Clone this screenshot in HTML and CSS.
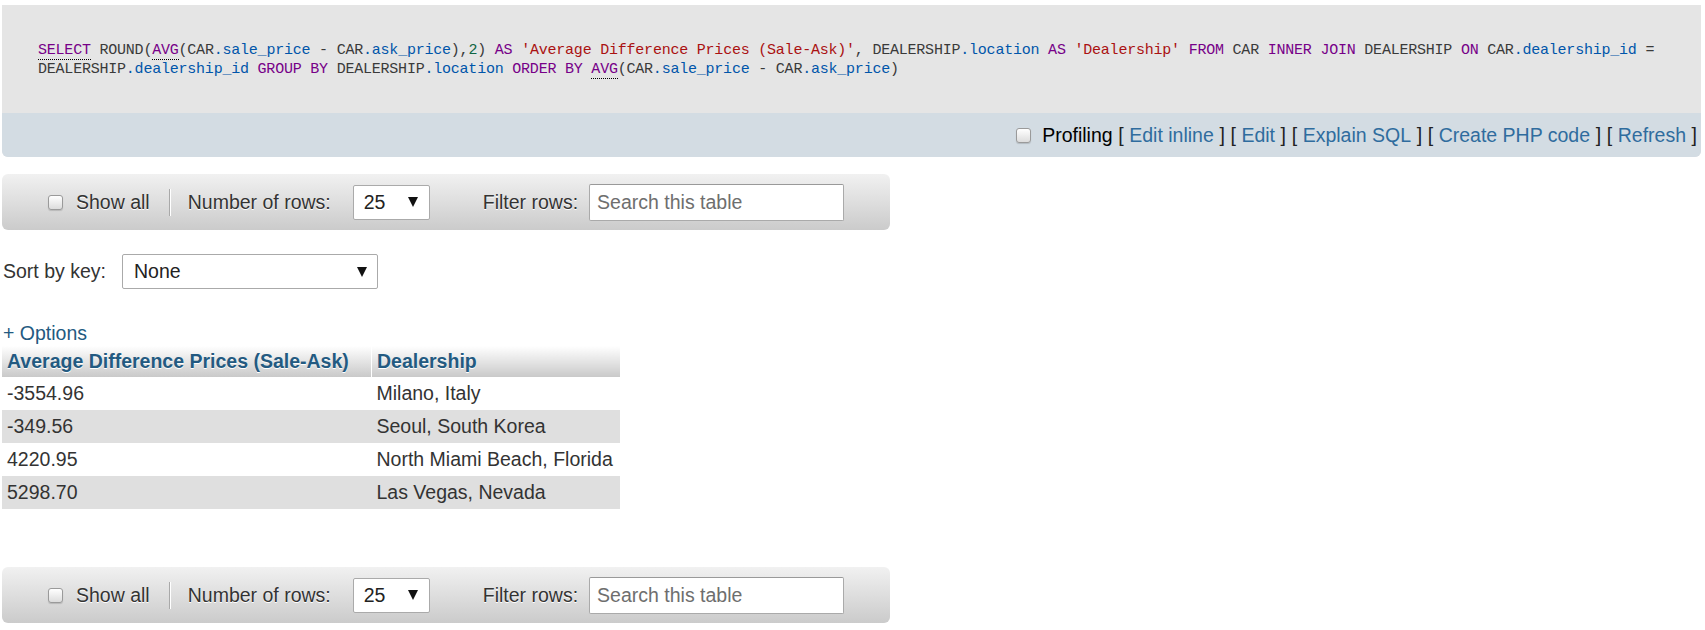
FILE: index.html
```html
<!DOCTYPE html>
<html lang="en">
<head>
<meta charset="utf-8">
<title>SQL result</title>
<link rel="stylesheet" href="styles.css">
</head>
<body>
<div class="page">
  <div class="sql-box">
    <div class="sql-code"><code><span class="kw doc">SELECT</span> ROUND(<span class="kw doc">AVG</span>(CAR<span class="var">.sale_price</span> - CAR<span class="var">.ask_price</span>),<span class="num">2</span>) <span class="kw">AS</span> <span class="str">'Average Difference Prices (Sale-Ask)'</span>, DEALERSHIP<span class="var">.location</span> <span class="kw">AS</span> <span class="str">'Dealership'</span> <span class="kw">FROM</span> CAR <span class="kw">INNER JOIN</span> DEALERSHIP <span class="kw">ON</span> CAR<span class="var">.dealership_id</span> =<br>DEALERSHIP<span class="var">.dealership_id</span> <span class="kw">GROUP BY</span> DEALERSHIP<span class="var">.location</span> <span class="kw">ORDER BY</span> <span class="kw doc">AVG</span>(CAR<span class="var">.sale_price</span> - CAR<span class="var">.ask_price</span>)</code></div>
    <div class="sql-tools">
      <span class="check"></span>
      <span class="profiling">Profiling</span>
      <span class="br">[</span><a class="link" href="#">Edit inline</a><span class="br">]</span>
      <span class="br">[</span><a class="link" href="#">Edit</a><span class="br">]</span>
      <span class="br">[</span><a class="link" href="#">Explain SQL</a><span class="br">]</span>
      <span class="br">[</span><a class="link" href="#">Create PHP code</a><span class="br">]</span>
      <span class="br">[</span><a class="link" href="#">Refresh</a><span class="br">]</span>
    </div>
  </div>

  <div class="navbar top">
    <span class="check nav-check"></span>
    <span class="nav-label show-all">Show all</span>
    <span class="nav-sep"></span>
    <span class="nav-label rows-label">Number of rows:</span>
    <span class="select rows-select"><span>25</span><span class="arrow"></span></span>
    <span class="nav-label filter-label">Filter rows:</span>
    <input class="search" type="text" placeholder="Search this table">
  </div>

  <div class="sortkey">
    <span class="sort-label">Sort by key:</span>
    <span class="select key-select"><span>None</span><span class="arrow"></span></span>
  </div>

  <div class="options"><a class="link" href="#">+ Options</a></div>

  <table class="results">
    <thead>
      <tr><th class="c1">Average Difference Prices (Sale-Ask)</th><th class="c2">Dealership</th></tr>
    </thead>
    <tbody>
      <tr><td>-3554.96</td><td>Milano, Italy</td></tr>
      <tr class="even"><td>-349.56</td><td>Seoul, South Korea</td></tr>
      <tr><td>4220.95</td><td>North Miami Beach, Florida</td></tr>
      <tr class="even"><td>5298.70</td><td>Las Vegas, Nevada</td></tr>
    </tbody>
  </table>

  <div class="navbar bottom">
    <span class="check nav-check"></span>
    <span class="nav-label show-all">Show all</span>
    <span class="nav-sep"></span>
    <span class="nav-label rows-label">Number of rows:</span>
    <span class="select rows-select"><span>25</span><span class="arrow"></span></span>
    <span class="nav-label filter-label">Filter rows:</span>
    <input class="search" type="text" placeholder="Search this table">
  </div>
</div>
</body>
</html>
```

FILE: styles.css
```css
html, body {
  margin: 0;
  padding: 0;
  background: #fff;
}

body {
  font-family: "Liberation Sans", Arial, sans-serif;
  font-size: 19.5px;
  color: #333;
}

.page {
  padding: 5px 4px 0 2px;
}

/* ---------- SQL query box ---------- */
.sql-box {
  background: #e5e5e5;
  border-radius: 0 0 6px 6px;
  overflow: hidden;
}

.sql-code {
  padding: 36px 36px 34px 36px;
  font-family: "Liberation Mono", "DejaVu Sans Mono", monospace;
  font-size: 15px;
  line-height: 19px;
}

.sql-code code {
  font-family: inherit;
  font-size: inherit;
  letter-spacing: -0.22px;
  color: #3a3a3a;
  white-space: nowrap;
}

.kw { color: #770088; }
.var { color: #0055aa; }
.str { color: #aa1111; }
.num { color: #116644; }
.doc { border-bottom: 1px dotted #000; }

.sql-tools {
  height: 44px;
  background: #d3dce3;
  display: flex;
  align-items: center;
  justify-content: flex-end;
  padding-right: 4px;
  gap: 5.6px;
  color: #222;
}

.sql-tools .check {
  margin-right: 6px;
}

.profiling {
  color: #000;
}

.br {
  color: #222;
}

.link {
  color: #235a81;
  text-decoration: none;
}

.sql-tools .link {
  color: #2f6c9e;
}

/* ---------- checkbox ---------- */
.check {
  display: inline-block;
  width: 13px;
  height: 13px;
  border: 1px solid #9a9a9a;
  border-radius: 3px;
  background: linear-gradient(#ffffff, #dcdcdc);
  box-shadow: 0 1px 1px rgba(0, 0, 0, 0.15);
  flex: none;
}

/* ---------- navigation toolbar ---------- */
.navbar {
  width: 888px;
  height: 56px;
  box-sizing: border-box;
  display: flex;
  align-items: center;
  padding-left: 46px;
  border-radius: 6px;
  background: linear-gradient(#f1f1f1, #cbcbcb);
  text-shadow: 0 1px 0 #fff;
  color: #333;
}

.navbar.top {
  margin-top: 17px;
}

.navbar.bottom {
  margin-top: 58px;
}

.nav-check {
  margin-right: 13px;
}

.show-all {
  margin-right: 19px;
}

.nav-sep {
  width: 1px;
  height: 27px;
  background: #a9a9a9;
  box-shadow: 1px 0 0 #ffffff;
  margin-right: 18px;
}

.rows-label {
  margin-right: 22px;
}

.select {
  display: inline-flex;
  align-items: center;
  justify-content: space-between;
  box-sizing: border-box;
  height: 35px;
  background: #fff;
  border: 1px solid #aaa;
  border-radius: 2px;
  text-shadow: none;
  color: #222;
}

.arrow {
  width: 0;
  height: 0;
  border-left: 5px solid transparent;
  border-right: 5px solid transparent;
  border-top: 10px solid #111;
}

.rows-select {
  width: 77px;
  padding: 0 11px 0 10px;
}

.filter-label {
  margin-left: 53px;
  margin-right: 11px;
}

.search {
  width: 255px;
  height: 37px;
  box-sizing: border-box;
  border: 1px solid #aaa;
  border-top-color: #999;
  border-radius: 2px;
  padding: 0 7px;
  font-family: "Liberation Sans", Arial, sans-serif;
  font-size: 19.5px;
  color: #333;
  background: #fff;
  outline: none;
}

.search::placeholder {
  color: #6e6e6e;
}

/* ---------- sort by key ---------- */
.sortkey {
  margin-top: 24px;
  display: flex;
  align-items: center;
  padding-left: 1px;
}

.sort-label {
  margin-right: 16px;
}

.key-select {
  width: 256px;
  padding: 0 10px 0 11px;
}

/* ---------- options link ---------- */
.options {
  margin-top: 33px;
  line-height: 22px;
  padding-left: 1px;
}

/* ---------- result table ---------- */
.results {
  margin-top: 2px;
  width: 618px;
  border-collapse: collapse;
  border-spacing: 0;
}

.results th {
  height: 31px;
  padding: 0 5px;
  text-align: left;
  font-weight: bold;
  color: #235a81;
  text-shadow: 0 1px 0 #fff;
  background: linear-gradient(#ffffff, #c9c9c9);
  white-space: nowrap;
}

.results th.c1 {
  width: 359px;
  border-right: 1px solid #fff;
}

.results td {
  height: 33px;
  padding: 0 5px;
  color: #333;
  white-space: nowrap;
}

.results tr.even td {
  background: #dfdfdf;
}
```
